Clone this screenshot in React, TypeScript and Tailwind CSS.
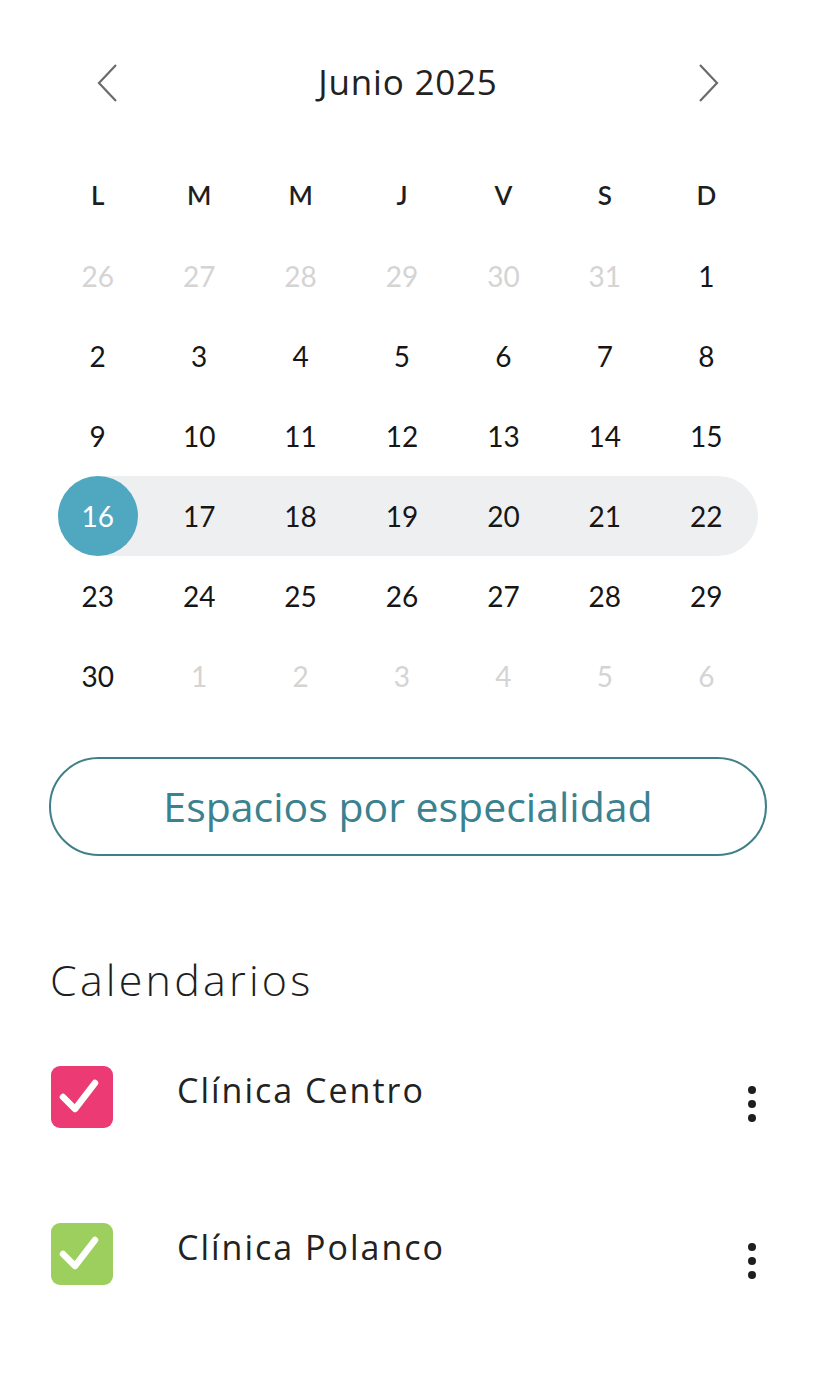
import React from 'react';

const weekDays = ['L', 'M', 'M', 'J', 'V', 'S', 'D'];

type Day = { n: number; muted?: boolean };

const weeks: Day[][] = [
  [26, 27, 28, 29, 30, 31].map((n) => ({ n, muted: true })).concat([{ n: 1 }]),
  [2, 3, 4, 5, 6, 7, 8].map((n) => ({ n })),
  [9, 10, 11, 12, 13, 14, 15].map((n) => ({ n })),
  [16, 17, 18, 19, 20, 21, 22].map((n) => ({ n })),
  [23, 24, 25, 26, 27, 28, 29].map((n) => ({ n })),
  [{ n: 30 }, ...[1, 2, 3, 4, 5, 6].map((n) => ({ n, muted: true }))],
];

const textFont = { fontFamily: '"Open Sans", Lato, sans-serif' };

const Chevron = ({ dir }: { dir: 'left' | 'right' }) => (
  <svg width="24" height="40" viewBox="0 0 24 40" fill="none">
    <path
      d={dir === 'left' ? 'M20 2 L3 20 L20 38' : 'M4 2 L21 20 L4 38'}
      stroke="#6b6b6b"
      strokeWidth="2.2"
    />
  </svg>
);

const Check = ({ color }: { color: string }) => (
  <div className={`w-[62px] h-[62px] rounded-[9px] flex items-center justify-center ${color}`}>
    <svg width="62" height="62" viewBox="0 0 62 62" fill="none">
      <path d="M12 44 L24 56 L44 30" stroke="white" strokeWidth="6.5" strokeLinecap="round" strokeLinejoin="round" transform="translate(0 -13)" />
    </svg>
  </div>
);

const Dots = () => (
  <div className="flex flex-col items-center gap-[6px] mt-[14px]">
    <span className="w-[8px] h-[8px] rounded-full bg-[#1e1e1e]" />
    <span className="w-[8px] h-[8px] rounded-full bg-[#1e1e1e]" />
    <span className="w-[8px] h-[8px] rounded-full bg-[#1e1e1e]" />
  </div>
);

const DayCell = ({ d, selected }: { d: Day; selected?: boolean }) => (
  <div className="h-[80px] flex items-center justify-center">
    {selected ? (
      <div className="w-[80px] h-[80px] rounded-full bg-[#4fa8bf] flex items-center justify-center text-white">
        {d.n}
      </div>
    ) : (
      <span className={d.muted ? 'text-[#d4d4d4]' : 'text-[#161616]'}>{d.n}</span>
    )}
  </div>
);

const App: React.FC = () => {
  return (
    <div className="w-[824px] h-[1400px] bg-white" style={{ fontFamily: 'Lato, "Open Sans", sans-serif' }}>
      {/* month header */}
      <div className="flex items-center justify-between pt-[64px] pl-[96px] pr-[104px] h-[102px]">
        <Chevron dir="left" />
        <span className="text-[35px] text-[#222] tracking-[0.8px] -mt-[2px]" style={textFont}>
          Junio 2025
        </span>
        <Chevron dir="right" />
      </div>

      {/* weekdays */}
      <div className="grid grid-cols-7 w-[710px] ml-[47px] mt-[73px] h-[40px] items-center">
        {weekDays.map((w, i) => (
          <div key={i} className="text-center text-[26px] font-semibold text-[#1e1e1e]">
            {w}
          </div>
        ))}
      </div>

      {/* days */}
      <div className="mt-[21px] text-[28px]">
        {weeks.map((week, wi) =>
          wi === 3 ? (
            <div key={wi} className="ml-[58px] w-[700px] h-[80px] rounded-full bg-[#eeeff1]">
              <div className="grid grid-cols-7 w-[710px] -ml-[11px]">
                {week.map((d, i) => (
                  <DayCell key={i} d={d} selected={i === 0} />
                ))}
              </div>
            </div>
          ) : (
            <div key={wi} className="grid grid-cols-7 w-[710px] ml-[47px]">
              {week.map((d, i) => (
                <DayCell key={i} d={d} />
              ))}
            </div>
          )
        )}
      </div>

      {/* button */}
      <button
        className="mt-[41px] ml-[49px] w-[718px] h-[99px] rounded-full border-2 border-[#3f7f88] text-[#3a8290] text-[41px] flex items-center justify-center"
        style={textFont}
      >
        Espacios por especialidad
      </button>

      {/* calendars */}
      <h2
        className="mt-[96px] ml-[50px] text-[43px] font-light text-[#1e1e1e] leading-[56px] tracking-[3.2px]"
        style={textFont}
      >
        Calendarios
      </h2>

      <div className="mt-[58px] pl-[51px] pr-[68px] flex flex-col gap-[95px]">
        {[
          { name: 'Clínica Centro', color: 'bg-[#ec3a74]' },
          { name: 'Clínica Polanco', color: 'bg-[#9ccf5e]' },
        ].map((c) => (
          <div key={c.name} className="flex items-center h-[62px]">
            <Check color={c.color} />
            <span
              className="ml-[64px] text-[34px] text-[#222] -mt-[14px] flex-1 tracking-[2px]"
              style={textFont}
            >
              {c.name}
            </span>
            <Dots />
          </div>
        ))}
      </div>
    </div>
  );
};

export default App;
